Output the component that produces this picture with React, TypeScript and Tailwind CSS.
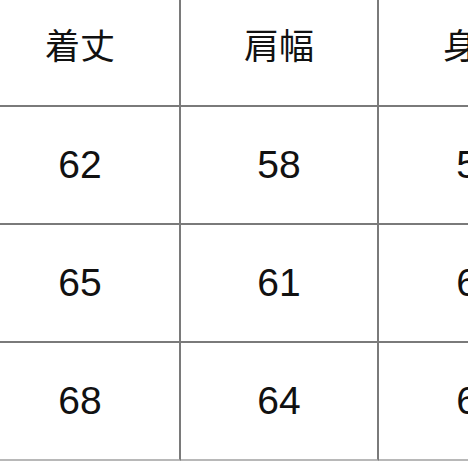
const header = ["着丈", "肩幅", "身幅"];
const rows = [
  ["62", "58", "56"],
  ["65", "61", "60"],
  ["68", "64", "64"],
];

export default function App() {
  return (
    <div
      className="h-[468px] w-[468px] overflow-hidden bg-white text-[#111]"
      style={{ fontFamily: '"Liberation Sans", "Noto Sans CJK JP", sans-serif' }}
    >
      <div className="-ml-[19px] -mt-[11px] grid w-[600px] grid-cols-[200px_198px_198px]">
        {[header, ...rows].map((row, r) => (
          <div key={r} className="contents">
            {row.map((cell, c) => (
              <div
                key={c}
                className={`flex h-[118px] items-center justify-center border-b-2 ${
                  r === rows.length ? "h-[117px] border-[#b8b8b8]" : "border-[#7a7a7a]"
                } ${c < 2 ? "border-r-2 border-r-[#7a7a7a]" : ""} ${
                  r === 0 ? "text-[35px]" : "text-[39px]"
                }`}
              >
                {cell}
              </div>
            ))}
          </div>
        ))}
      </div>
    </div>
  );
}
